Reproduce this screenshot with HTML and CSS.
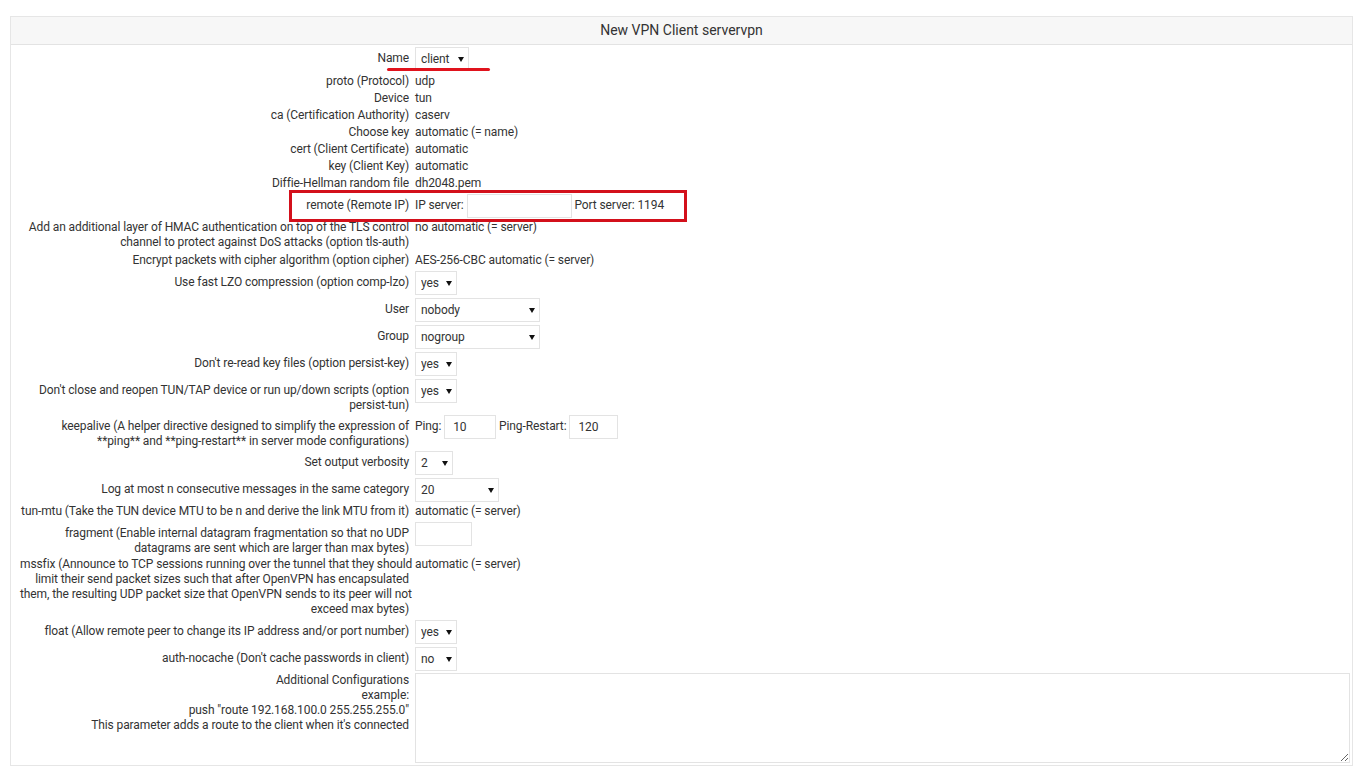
FILE: index.html
```html
<!DOCTYPE html>
<html lang="en">
<head>
  <meta charset="UTF-8">
  <title>New VPN Client servervpn</title>
  <link rel="stylesheet" href="styles.css">
</head>
<body>

  <div class="page">
    <div class="panel">
      <div class="panel-head">New VPN Client servervpn</div>
      <table class="form">
        <tr class="ctl first">
          <th>Name</th>
          <td><span class="sel"><select class="w-client"><option>client</option></select></span></td>
        </tr>
        <tr><th>proto (Protocol)</th><td>udp</td></tr>
        <tr><th>Device</th><td>tun</td></tr>
        <tr><th>ca (Certification Authority)</th><td>caserv</td></tr>
        <tr><th>Choose key</th><td>automatic (= name)</td></tr>
        <tr><th>cert (Client Certificate)</th><td>automatic</td></tr>
        <tr><th>key (Client Key)</th><td>automatic</td></tr>
        <tr><th>Diffie-Hellman random file</th><td>dh2048.pem</td></tr>
        <tr class="ctl">
          <th>remote (Remote IP)</th>
          <td>IP server: <input type="text" class="w-ip"> Port server: 1194</td>
        </tr>
        <tr class="pb">
          <th>Add an additional layer of HMAC authentication on top of the TLS control<br>channel to protect against DoS attacks (option tls-auth)</th>
          <td>no automatic (= server)</td>
        </tr>
        <tr><th>Encrypt packets with cipher algorithm (option cipher)</th><td>AES-256-CBC automatic (= server)</td></tr>
        <tr class="ctl">
          <th>Use fast LZO compression (option comp-lzo)</th>
          <td><span class="sel"><select class="w-yes"><option>yes</option><option>no</option></select></span></td>
        </tr>
        <tr class="ctl">
          <th>User</th>
          <td><span class="sel"><select class="w-user"><option>nobody</option></select></span></td>
        </tr>
        <tr class="ctl">
          <th>Group</th>
          <td><span class="sel"><select class="w-user"><option>nogroup</option></select></span></td>
        </tr>
        <tr class="ctl">
          <th>Don't re-read key files (option persist-key)</th>
          <td><span class="sel"><select class="w-yes"><option>yes</option><option>no</option></select></span></td>
        </tr>
        <tr class="ctl">
          <th>Don't close and reopen TUN/TAP device or run up/down scripts (option<br>persist-tun)</th>
          <td><span class="sel"><select class="w-yes"><option>yes</option><option>no</option></select></span></td>
        </tr>
        <tr class="ctl">
          <th>keepalive (A helper directive designed to simplify the expression of<br>**ping** and **ping-restart** in server mode configurations)</th>
          <td>Ping: <input type="text" class="w-ping" value="10"> Ping-Restart: <input type="text" class="w-restart" value="120"></td>
        </tr>
        <tr class="ctl">
          <th>Set output verbosity</th>
          <td><span class="sel"><select class="w-verb"><option>2</option></select></span></td>
        </tr>
        <tr class="ctl">
          <th>Log at most n consecutive messages in the same category</th>
          <td><span class="sel"><select class="w-log"><option>20</option></select></span></td>
        </tr>
        <tr><th>tun-mtu (Take the TUN device MTU to be n and derive the link MTU from it)</th><td>automatic (= server)</td></tr>
        <tr class="ctl">
          <th>fragment (Enable internal datagram fragmentation so that no UDP<br>datagrams are sent which are larger than max bytes)</th>
          <td><input type="text" class="w-frag"></td>
        </tr>
        <tr>
          <th>mssfix (Announce to TCP sessions running over the tunnel that they should<br>limit their send packet sizes such that after OpenVPN has encapsulated<br>them, the resulting UDP packet size that OpenVPN sends to its peer will not<br>exceed max bytes)</th>
          <td>automatic (= server)</td>
        </tr>
        <tr class="ctl">
          <th>float (Allow remote peer to change its IP address and/or port number)</th>
          <td><span class="sel"><select class="w-yes"><option>yes</option><option>no</option></select></span></td>
        </tr>
        <tr class="ctl">
          <th>auth-nocache (Don't cache passwords in client)</th>
          <td><span class="sel"><select class="w-yes"><option>no</option><option>yes</option></select></span></td>
        </tr>
        <tr class="extra">
          <th>Additional Configurations<br>example:<br>push "route 192.168.100.0 255.255.255.0"<br>This parameter adds a route to the client when it's connected</th>
          <td><textarea></textarea></td>
        </tr>
      </table>
    </div>

    <!-- red markers drawn over the form -->
    <div class="mark-line"></div>
    <div class="mark-box"></div>
  </div>

</body>
</html>
```

FILE: styles.css
```css
body {
  margin: 0;
  font-family: Roboto, 'Liberation Sans', sans-serif;
  font-size: 12px;
  letter-spacing: -0.1px;
  color: #333;
  background: #fff;
}

.page {
  position: relative;
  padding: 16px 9px 0 10px;
}

.panel {
  border: 1px solid #e6e6e6;
}

.panel-head {
  height: 28px;
  line-height: 26px;
  padding-bottom: 2px;
  box-sizing: border-box;
  text-align: center;
  font-size: 14px;
  letter-spacing: 0;
  color: #333;
  background: #f7f7f7;
  border-bottom: 1px solid #e3e3e3;
}

.form {
  border-collapse: collapse;
  width: 100%;
  table-layout: fixed;
}

.form th,
.form td {
  padding: 1px 0;
  line-height: 15px;
  vertical-align: top;
}

.form th {
  width: 389px;
  padding-left: 9px;
  padding-right: 6px;
  text-align: right;
  font-weight: normal;
  white-space: nowrap;
}

.form tr.pb th,
.form tr.pb td {
  padding-bottom: 2px;
}

.form tr.ctl th {
  padding-top: 6px;
  padding-bottom: 0;
}

.form tr.ctl td {
  padding-top: 2px;
  padding-bottom: 1px;
}

.form tr.first td {
  padding-bottom: 2px;
}

.sel {
  display: inline-block;
  position: relative;
  vertical-align: top;
}

.sel::after {
  content: "";
  position: absolute;
  right: 5px;
  top: 10px;
  border-left: 3px solid transparent;
  border-right: 3px solid transparent;
  border-top: 5px solid #111;
  pointer-events: none;
}

select,
input,
textarea {
  font-family: inherit;
  font-size: 12px;
  letter-spacing: -0.1px;
  color: #333;
  background: #fff;
  border: 1px solid #e3e3e3;
  border-radius: 0;
  outline: none;
  box-sizing: border-box;
  margin: 0;
}

select {
  -webkit-appearance: none;
  appearance: none;
  height: 24px;
  padding: 0 0 0 5px;
}

input {
  height: 24px;
  padding: 0 8px;
  vertical-align: middle;
}

.w-client { width: 54px; }
.w-yes { width: 42px; }
.w-user { width: 125px; }
.w-verb { width: 38px; }
.w-log { width: 84px; }
.w-ip { width: 105px; }
.w-ping { width: 52px; }
.w-restart { width: 49px; }
.w-frag { width: 57px; vertical-align: top; }

.form tr.extra td {
  padding: 1px 0 2px;
}

textarea {
  display: block;
  width: 935px;
  height: 90px;
  padding: 4px 6px;
}

.mark-line {
  position: absolute;
  left: 387px;
  top: 68px;
  width: 103px;
  height: 3px;
  border-radius: 2px;
  background: #e0131d;
}

.mark-box {
  position: absolute;
  left: 289px;
  top: 190px;
  width: 398px;
  height: 32px;
  border: 3px solid #d3101b;
  box-sizing: border-box;
}
```
